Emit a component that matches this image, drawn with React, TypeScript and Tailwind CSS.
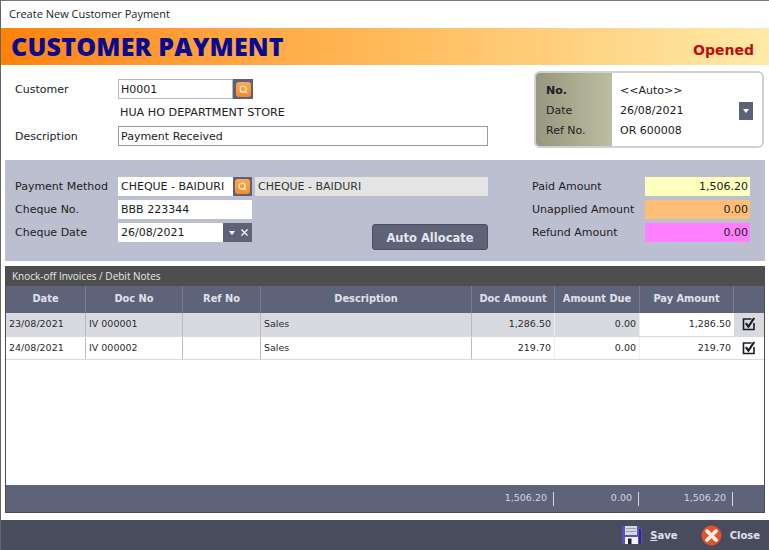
import { Search, X } from 'lucide-react'

const GRID_COLS = 'grid grid-cols-[80px_97px_78px_211px_83px_85px_94px_1fr]'

const rows = [
  { date: '23/08/2021', doc: 'IV 000001', desc: 'Sales', amount: '1,286.50', due: '0.00', pay: '1,286.50', shade: true },
  { date: '24/08/2021', doc: 'IV 000002', desc: 'Sales', amount: '219.70', due: '0.00', pay: '219.70', shade: false },
]

const amounts = [
  { label: 'Paid Amount', value: '1,506.20', color: 'bg-[#ffffbe]' },
  { label: 'Unapplied Amount', value: '0.00', color: 'bg-[#ffbe78]' },
  { label: 'Refund Amount', value: '0.00', color: 'bg-[#ff80ff]' },
]

function LookupButton({ className }: { className: string }) {
  return (
    <div className={`flex items-center justify-center bg-[#5e6276] ${className}`}>
      <div className="flex h-[15px] w-[15px] items-center justify-center rounded-[3px] bg-gradient-to-b from-[#ffa850] to-[#f58a2a]">
        <Search size={9} strokeWidth={3} className="text-[#fff3d0]" />
      </div>
    </div>
  )
}

function Caret() {
  return <div className="h-0 w-0 border-x-[3px] border-t-[4px] border-x-transparent border-t-white" />
}

function CheckMark() {
  return (
    <svg width="14" height="14" viewBox="0 0 14 14" fill="none">
      <path d="M9.5 2H1.5V12.5H12V6" stroke="#1c1c24" strokeWidth="1.6" />
      <path d="M3.8 6.2L6.4 9.6L12.2 1" stroke="#1c1c24" strokeWidth="2.2" />
    </svg>
  )
}

function SaveIcon() {
  return (
    <svg width="20" height="20" viewBox="0 0 20 20">
      <path d="M0 1H16L20 4V19H0Z" fill="#5a50c0" />
      <rect x="17" y="4" width="2" height="15" fill="#2c2c70" />
      <rect x="3" y="1" width="12" height="9" fill="#d4d6e2" />
      <rect x="4" y="3" width="10" height="1" fill="#9a9db2" />
      <rect x="4" y="6" width="10" height="1" fill="#9a9db2" />
      <rect x="3" y="12" width="13" height="7" fill="#f4f4f8" />
      <rect x="6" y="13.5" width="3.5" height="5.5" fill="#20203a" />
    </svg>
  )
}

function CloseIcon() {
  return (
    <svg width="21" height="21" viewBox="0 0 21 21">
      <circle cx="10.5" cy="10.5" r="10" fill="#e2552c" />
      <path d="M6 6L15 15M15 6L6 15" stroke="#f6ece6" strokeWidth="3.8" strokeLinecap="round" />
    </svg>
  )
}

export default function App() {
  return (
    <div
      className="flex h-[550px] w-[769px] flex-col overflow-hidden border-t border-l border-t-[#777] border-l-[#666] bg-white text-[11px] text-[#1c1c1c]"
      style={{ fontFamily: '"DejaVu Sans", sans-serif' }}
    >
      {/* Title bar */}
      <div className="flex h-[27px] shrink-0 items-center pl-2 font-['Open_Sans',sans-serif] text-[11px] text-[#222]">
        Create New Customer Payment
      </div>

      {/* Banner */}
      <div className="flex h-[37px] shrink-0 items-center justify-between bg-gradient-to-r from-[#ff8204] via-[#ffba58] to-[#ffeaa8] pr-[15px] pl-[10px]">
        <span className="font-['Open_Sans',sans-serif] text-[25px] font-extrabold tracking-[0.2px] text-[#0a0a90]">CUSTOMER PAYMENT</span>
        <span className="pt-[8px] text-[14px] font-bold text-[#b80f0f]">Opened</span>
      </div>

      {/* Customer details */}
      <div className="flex h-[95px] shrink-0 justify-between pt-[6px] pr-[5px] pl-[14px]">
        <div className="flex flex-col pt-[8px]">
          <div className="flex h-[20px] items-center">
            <span className="w-[103px] pt-[2px]">Customer</span>
            <div className="h-[20px] w-[115px] border border-[#b8b8c4] pl-[2px] leading-[19px]">H0001</div>
            <LookupButton className="h-[20px] w-[20px]" />
          </div>
          <div className="h-[27px] pt-[6px] pl-[105px] text-[11.2px] text-[#222]">HUA HO DEPARTMENT STORE</div>
          <div className="flex h-[20px] items-center">
            <span className="w-[103px] pt-[2px]">Description</span>
            <div className="h-[20px] w-[370px] border border-[#9a9aa6] pl-[2px] leading-[19px]">Payment Received</div>
          </div>
        </div>

        <div className="flex h-[77px] w-[230px] overflow-hidden rounded-[6px] border-2 border-[#d0d0d0]">
          <div className="flex w-[76px] flex-col justify-center gap-[4px] bg-gradient-to-r from-[#979780] to-[#bdbda2] pt-[2px] pl-[10px] leading-[16px]">
            <span className="font-bold">No.</span>
            <span>Date</span>
            <span>Ref No.</span>
          </div>
          <div className="flex flex-1 flex-col justify-center gap-[4px] pt-[2px] pl-[8px] leading-[16px]">
            <span>&lt;&lt;Auto&gt;&gt;</span>
            <div className="flex h-[16px] items-center justify-between pr-[9px]">
              <span>26/08/2021</span>
              <div className="flex h-[18px] w-[14px] items-center justify-center bg-[#5e6276]">
                <Caret />
              </div>
            </div>
            <span>OR 600008</span>
          </div>
        </div>
      </div>

      {/* Payment panel */}
      <div className="mx-[4px] flex h-[101px] shrink-0 bg-[#bcbfd0] pt-[17px] pr-[15px] pl-[10px]">
        <div className="flex w-[473px] shrink-0 flex-col gap-[4px]">
          <div className="flex h-[19px] items-center">
            <span className="w-[103px] pt-[2px]">Payment Method</span>
            <div className="h-[19px] w-[115px] bg-white pl-[3px] leading-[19px] whitespace-nowrap">CHEQUE - BAIDURI</div>
            <LookupButton className="h-[19px] w-[19px]" />
            <div className="ml-[3px] h-[19px] w-[233px] bg-[#e4e4e4] pl-[3px] leading-[19px] text-[#333]">CHEQUE - BAIDURI</div>
          </div>
          <div className="flex justify-between">
            <div className="flex flex-col gap-[4px]">
              <div className="flex h-[19px] items-center">
                <span className="w-[103px] pt-[2px]">Cheque No.</span>
                <div className="h-[19px] w-[134px] bg-white pl-[3px] leading-[19px]">BBB 223344</div>
              </div>
              <div className="flex h-[19px] items-center">
                <span className="w-[103px] pt-[2px]">Cheque Date</span>
                <div className="h-[19px] w-[105px] bg-white pl-[3px] leading-[19px]">26/08/2021</div>
                <div className="flex h-[19px] w-[29px] items-center justify-between bg-[#5e6276] pr-[2px] pl-[6px]">
                  <Caret />
                  <X size={11} strokeWidth={2.5} className="text-white" />
                </div>
              </div>
            </div>
            <div className="mt-[24px] flex h-[26px] w-[116px] items-center justify-center rounded-[3px] border border-[#4a4e60] bg-[#5e6276] pt-[3px] text-[11.5px] font-bold text-[#e4e6f0]">
              Auto Allocate
            </div>
          </div>
        </div>

        <div className="ml-[44px] flex flex-col gap-[4px]">
          {amounts.map(a => (
            <div key={a.label} className="flex h-[19px] items-center">
              <span className="w-[113px] pt-[2px]">{a.label}</span>
              <div className={`h-[19px] w-[105px] pr-[2px] text-right leading-[19px] ${a.color}`}>{a.value}</div>
            </div>
          ))}
        </div>
      </div>

      {/* Knock-off grid */}
      <div className="mx-[4px] mt-[5px] flex h-[247px] shrink-0 flex-col border border-[#4c4c4c]">
        <div className="flex h-[19px] shrink-0 items-center bg-[#4e4e4e] pl-[6px] font-['Open_Sans',sans-serif] text-[10px] text-[#e8e8e8]">
          Knock-off Invoices / Debit Notes
        </div>
        <div className={`${GRID_COLS} h-[27px] shrink-0 bg-[#5e6379] text-[9.8px] font-bold text-[#e0e2ec]`}>
          {['Date', 'Doc No', 'Ref No', 'Description', 'Doc Amount', 'Amount Due', 'Pay Amount', ''].map((h, i) => (
            <div key={i} className="flex items-center justify-center border-r border-[#777b90] last:border-r-0">
              {h}
            </div>
          ))}
        </div>
        <div className="flex-1 bg-white text-[9.5px] text-[#2a2a2a]">
          {rows.map(r => (
            <div key={r.date} className={`${GRID_COLS} h-[23.5px] border-b border-[#d8dae0] ${r.shade ? 'bg-[#d8dae0]' : 'bg-white'}`}>
              <div className="flex items-center border-r border-[#b8bac4] pl-[3px]">{r.date}</div>
              <div className="flex items-center border-r border-[#b8bac4] pl-[3px]">{r.doc}</div>
              <div className="border-r border-[#b8bac4]" />
              <div className="flex items-center border-r border-[#b8bac4] pl-[3px]">{r.desc}</div>
              <div className="flex items-center justify-end border-r border-[#eceef2] pr-[3px]">{r.amount}</div>
              <div className="flex items-center justify-end border-r border-[#eceef2] pr-[3px]">{r.due}</div>
              <div className="flex items-center justify-end bg-white pr-[3px]">{r.pay}</div>
              <div className="flex items-center justify-center">
                <CheckMark />
              </div>
            </div>
          ))}
        </div>
        <div className={`${GRID_COLS} h-[27px] shrink-0 bg-[#5e6379] text-[9.5px] text-[#d4d6e0]`}>
          <div className="col-span-4" />
          {['1,506.20', '0.00', '1,506.20'].map((v, i) => (
            <div key={i} className="flex items-center justify-end pr-[1px]">
              <span className="mr-[6px]">{v}</span>
              <span className="h-[14px] w-px bg-[#d4d6e0]" />
            </div>
          ))}
        </div>
      </div>

      {/* Footer */}
      <div className="mt-[7px] flex flex-1 items-center justify-end bg-[#484c5c] pr-[9px] text-[10px] font-bold text-[#dfe1ea]">
        <SaveIcon />
        <span className="mr-[23px] ml-[8px]">
          <span className="underline">S</span>ave
        </span>
        <CloseIcon />
        <span className="ml-[8px]">Close</span>
      </div>
    </div>
  )
}
